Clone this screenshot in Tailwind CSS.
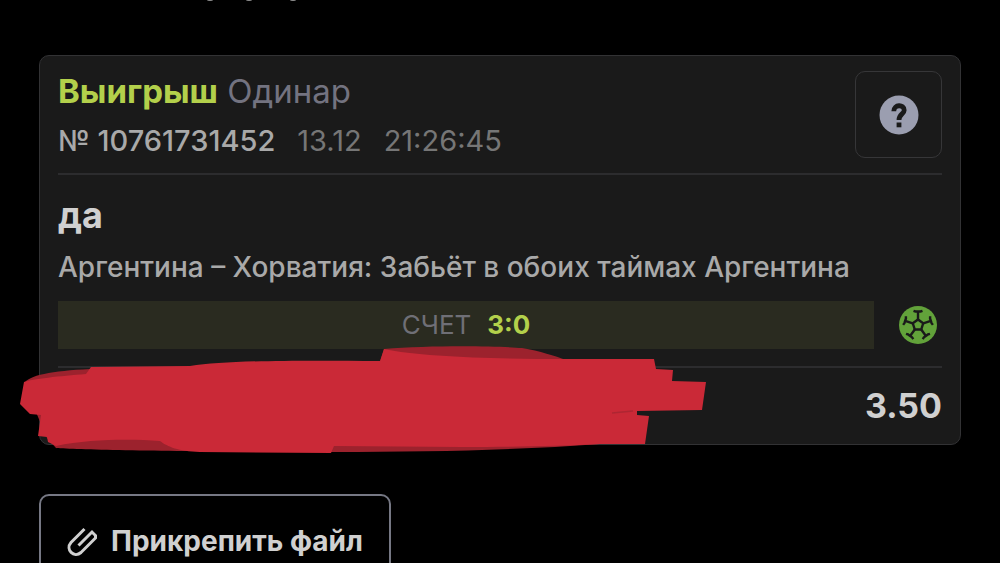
<!DOCTYPE html>
<html lang="ru">
<head>
    <meta charset="UTF-8">
    <meta name="viewport" content="width=device-width, initial-scale=1.0">
    <title>Выигрыш</title>
    <script src="https://cdn.jsdelivr.net/npm/@tailwindcss/browser@4"></script>
</head>
<body class="bg-black font-['Inter','Open_Sans',sans-serif] overflow-hidden">
    <div class="px-[39px]">
        <!-- lower edge of the line scrolled off the top -->
        <svg class="block h-[55px] w-full" fill="#8f8f8f" aria-hidden="true">
            <ellipse cx="171" cy="0" rx="3" ry="1" />
            <ellipse cx="210" cy="0" rx="3" ry="1" />
            <ellipse cx="254" cy="0" rx="3" ry="1" />
        </svg>

        <main class="relative rounded-[10px] border border-[#323234] bg-[#1a1a1a] px-[18px] pt-[15px]">
            <header class="flex items-start justify-between border-b-2 border-[#2c2c2e] pb-[15px]">
                <div>
                    <h1 class="text-[33px] leading-10 text-[#737380]"><span class="font-bold text-[#b3d04b]">Выигрыш</span> Одинар</h1>
                    <p class="mt-[14px] flex gap-[22px] text-[29px] leading-8 text-[#767676]">
                        <span class="font-medium text-[#a9a9a9]">№ 10761731452</span>
                        <span>13.12</span>
                        <span>21:26:45</span>
                    </p>
                </div>
                <button type="button" aria-label="Помощь" class="flex size-[87px] items-center justify-center rounded-[10px] border border-[#363638]">
                    <svg class="size-10" viewBox="0 0 40 40">
                        <circle cx="20" cy="20" r="19.5" fill="#9b9eb0" />
                        <path d="M14.8 16.2C14.8 9.2 25.2 9 25.2 15.2C25.2 19 20 19 20 25" fill="none" stroke="#1a1a1a" stroke-width="4.8" />
                        <path d="M17.6 27.500h4.800v4.800h-4.800z" fill="#1a1a1a" />
                    </svg>
                </button>
            </header>

            <section class="border-b-2 border-[#2c2c2e] pb-[17px] pt-5">
                <h2 class="text-[36px] font-bold leading-10 text-[#d0d0d0]">да</h2>
                <p class="mt-4 whitespace-nowrap text-[28px] font-medium leading-8 text-[#a9a9a9]">Аргентина – Хорватия: Забьёт в обоих таймах Аргентина</p>
                <div class="mt-[18px] flex items-center gap-6">
                    <p class="flex h-12 flex-1 items-center justify-center gap-4 bg-[#2a2b20] text-[26px] leading-8 text-[#6f6f76]">СЧЕТ <b class="text-[#b3d04b]">3:0</b></p>
                    <svg class="mr-1 size-10" viewBox="0 0 40 40" aria-hidden="true">
                        <circle cx="20" cy="20" r="19" fill="#62a23a" />
                        <g fill="none" stroke="#1a1a1a" stroke-width="2.4">
                            <path d="M20 14.500L25.200 18.300L23.200 24.500H16.800L14.800 18.300Z" />
                            <path id="arm" d="M20 14.500V6.500M15.500 5.800L17.500 6.500H22.500L24.500 5.800" />
                            <use href="#arm" transform="rotate(72 20 20)" />
                            <use href="#arm" transform="rotate(144 20 20)" />
                            <use href="#arm" transform="rotate(216 20 20)" />
                            <use href="#arm" transform="rotate(288 20 20)" />
                        </g>
                    </svg>
                </div>
            </section>

            <p class="py-[18px] text-right text-[34px] font-bold leading-10 text-[#d0d0d0]">3.50</p>

            <!-- marker strokes over the stake -->
            <svg class="absolute -left-5 top-[288px] h-[112px] w-[690px]" viewBox="20 344 690 112" aria-hidden="true">
                <path fill="#9c222d" d="M24 384C28 375 52 371 90 369L380 362L384 349C430 345 500 346 522 348C540 351 555 356 566 360L640 400L600 444C520 450 430 452 334 452C200 452 80 450 56 448L47 438Z" />
                <path fill="#ca2937" d="M24 382C32 379 60 376 86 374L91 367L190 366C225 361 280 360 380 361L384 349C420 357 500 359 566 359L654 359L656 369L673 370L672 381L706 382L702 410L637 411L637 415L649 416L645 444L600 444C530 448 430 447 334 446L331 453L200 452C178 451 168 447 160 441C130 439 90 439 56 446L48 442L47 437L38 436L41 415L30 414L20 404Z" />
                <path fill="none" stroke="#ae2632" stroke-width="1.500" d="M612 413L633 411" />
            </svg>
        </main>

        <button type="button" class="mt-[49px] flex h-[94px] items-center gap-3 rounded-[10px] border-2 border-[#767884] px-[26px] text-[28px] font-bold text-[#d0d0d0]">
            <svg class="size-8" viewBox="0 0 32 32" fill="none" stroke="#d0d0d0" stroke-width="3" aria-hidden="true">
                <path d="M17.500 4L4 17.500C-2 24.500 7 33.500 14 27.500L28.500 13V10.500L25 7L11.500 20.500" />
            </svg>
            Прикрепить файл
        </button>
    </div>
</body>
</html>
